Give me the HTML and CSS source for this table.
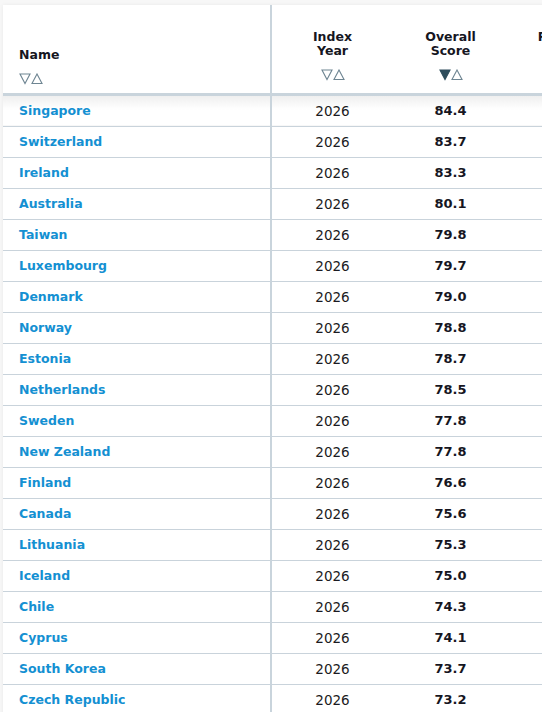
FILE: index.html
```html
<!DOCTYPE html>
<html>
<head>
<meta charset="utf-8">
<link rel="stylesheet" href="styles.css">
</head>
<body>
<div class="page">
<div class="card">
<table class="rank">
<colgroup>
<col class="c-name"><col class="c-year"><col class="c-score"><col class="c-next">
</colgroup>
<thead>
<tr>
<th class="h-name"><div class="h-label">Name</div><svg class="sort" viewBox="0 0 24 12" width="24" height="12"><polygon points="1,1 11,1 6,10.5" class="tri"/><polygon points="13,10.5 23,10.5 18,1" class="tri"/></svg></th>
<th class="h-num"><div class="h-label">Index<br>Year</div><svg class="sort" viewBox="0 0 24 12" width="24" height="12"><polygon points="1,1 11,1 6,10.5" class="tri"/><polygon points="13,10.5 23,10.5 18,1" class="tri"/></svg></th>
<th class="h-num"><div class="h-label">Overall<br>Score</div><svg class="sort" viewBox="0 0 24 12" width="24" height="12"><polygon points="1,1 11,1 6,10.5" class="tri active"/><polygon points="13,10.5 23,10.5 18,1" class="tri"/></svg></th>
<th class="h-num"><div class="h-label">Property<br>Rights</div><svg class="sort" viewBox="0 0 24 12" width="24" height="12"><polygon points="1,1 11,1 6,10.5" class="tri"/><polygon points="13,10.5 23,10.5 18,1" class="tri"/></svg></th>
</tr>
</thead>
<tbody>
<tr class="first"><td class="name">Singapore</td><td class="year">2026</td><td class="score">84.4</td><td></td></tr>
<tr><td class="name">Switzerland</td><td class="year">2026</td><td class="score">83.7</td><td></td></tr>
<tr><td class="name">Ireland</td><td class="year">2026</td><td class="score">83.3</td><td></td></tr>
<tr><td class="name">Australia</td><td class="year">2026</td><td class="score">80.1</td><td></td></tr>
<tr><td class="name">Taiwan</td><td class="year">2026</td><td class="score">79.8</td><td></td></tr>
<tr><td class="name">Luxembourg</td><td class="year">2026</td><td class="score">79.7</td><td></td></tr>
<tr><td class="name">Denmark</td><td class="year">2026</td><td class="score">79.0</td><td></td></tr>
<tr><td class="name">Norway</td><td class="year">2026</td><td class="score">78.8</td><td></td></tr>
<tr><td class="name">Estonia</td><td class="year">2026</td><td class="score">78.7</td><td></td></tr>
<tr><td class="name">Netherlands</td><td class="year">2026</td><td class="score">78.5</td><td></td></tr>
<tr><td class="name">Sweden</td><td class="year">2026</td><td class="score">77.8</td><td></td></tr>
<tr><td class="name">New Zealand</td><td class="year">2026</td><td class="score">77.8</td><td></td></tr>
<tr><td class="name">Finland</td><td class="year">2026</td><td class="score">76.6</td><td></td></tr>
<tr><td class="name">Canada</td><td class="year">2026</td><td class="score">75.6</td><td></td></tr>
<tr><td class="name">Lithuania</td><td class="year">2026</td><td class="score">75.3</td><td></td></tr>
<tr><td class="name">Iceland</td><td class="year">2026</td><td class="score">75.0</td><td></td></tr>
<tr><td class="name">Chile</td><td class="year">2026</td><td class="score">74.3</td><td></td></tr>
<tr><td class="name">Cyprus</td><td class="year">2026</td><td class="score">74.1</td><td></td></tr>
<tr><td class="name">South Korea</td><td class="year">2026</td><td class="score">73.7</td><td></td></tr>
<tr><td class="name">Czech Republic</td><td class="year">2026</td><td class="score">73.2</td><td></td></tr>
</tbody>
</table>
</div>
</div>
</body>
</html>
```
FILE: styles.css
```css
html, body {
  margin: 0;
  padding: 0;
  background: #f7f7f7;
  overflow: hidden;
}
.page {
  width: 542px;
  height: 712px;
  overflow: hidden;
  padding: 5px 0 0 3px;
  box-sizing: border-box;
}
.card {
  background: #fff;
  width: 700px;
  box-shadow: 0 0 4px rgba(0,0,0,0.06);
}
.rank {
  border-collapse: collapse;
  table-layout: fixed;
  width: 626px;
  font-family: "DejaVu Sans", sans-serif;
  color: #16161f;
}
.c-name { width: 268px; }
.c-year { width: 122px; }
.c-score { width: 115px; }
.c-next { width: 121px; }
thead th {
  height: 89px;
  padding: 0 0 12px 0;
  vertical-align: bottom;
  border-bottom: 3px solid #c9d4dc;
  box-sizing: border-box;
  font-weight: bold;
  font-size: 12.5px;
  line-height: 14px;
}
.h-name {
  text-align: left;
  padding-left: 16px;
  border-right: 2px solid #c9d4dc;
}
thead th.h-name { padding-bottom: 8px; }
.h-name .h-label { margin-bottom: 11px; }
.h-num { text-align: center; }
.h-num .h-label { margin-bottom: 11px; }
.sort { display: block; }
.h-num .sort { margin: 0 auto; }
.tri {
  fill: none;
  stroke: #6e8592;
  stroke-width: 1.1;
  stroke-linejoin: miter;
}
.tri.active {
  fill: #2e4d5c;
  stroke: #2e4d5c;
}
tbody td {
  height: 30px;
  padding: 0;
  border-bottom: 1px solid #c9d3db;
  font-size: 13px;
  vertical-align: middle;
}
tbody td.name {
  padding-left: 16px;
  color: #1490d2;
  font-weight: bold;
  font-size: 12.5px;
  border-right: 2px solid #c9d4dc;
}
td.year {
  text-align: center;
  font-size: 13.5px;
  color: #1b1b22;
}
td.score {
  text-align: center;
  font-weight: bold;
  font-size: 13px;
}
tr.first td {
  background: linear-gradient(#eeeeee, #ffffff 14px);
}
```
